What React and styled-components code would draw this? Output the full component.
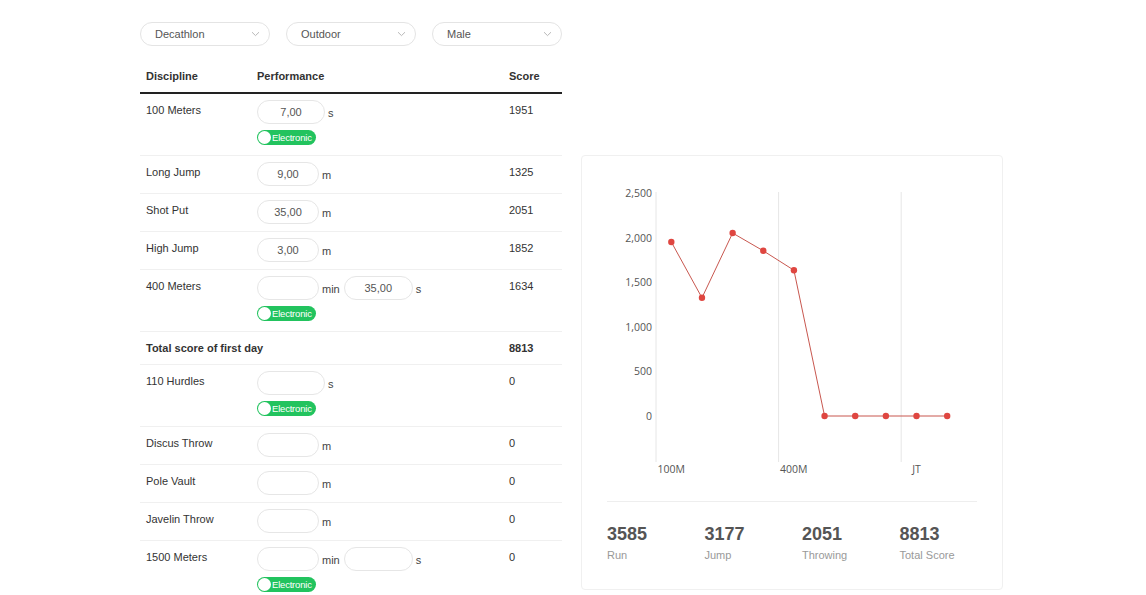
import React from "react";
import styled, { createGlobalStyle } from "styled-components";

const Global = createGlobalStyle`
  html, body { margin: 0; padding: 0; background: #fff; }
  body { font-family: "Liberation Sans", Arial, sans-serif; color: #333; }
  * { box-sizing: border-box; }
`;

const Page = styled.div`
  display: flex;
  align-items: flex-start;
  padding: 22px 0 0 140px;
`;

const LeftCol = styled.div`
  width: 422px;
  display: flex;
  flex-direction: column;
`;

const Filters = styled.div`
  display: flex;
  gap: 16px;
`;

const Select = styled.div`
  width: 130px;
  height: 24px;
  border: 1px solid #e4e4e4;
  border-radius: 12px;
  display: flex;
  align-items: center;
  justify-content: space-between;
  padding: 0 9px 0 14px;
  font-size: 11px;
  color: #555;
`;

const Table = styled.table`
  margin-top: 14px;
  width: 422px;
  border-collapse: collapse;
  font-size: 11px;
  color: #333;
`;

const Th = styled.th`
  text-align: left;
  font-weight: bold;
  padding: 8px 6px 7px;
  line-height: 17px;
  width: ${(p) => p.$w}px;
  border-bottom: 2px solid #222;
`;

const Tr = styled.tr`
  border-bottom: 1px solid #f0f0f0;
`;

const Td = styled.td`
  vertical-align: top;
  padding: ${(p) => (p.$total ? "8px 6px 7px" : "6px 6px 7px")};
  line-height: ${(p) => (p.$total ? "17px" : "20px")};
  font-weight: ${(p) => (p.$bold ? "bold" : "normal")};
`;

const InputLine = styled.div`
  display: flex;
  align-items: center;
  gap: 3px;
`;

const Field = styled.div`
  width: ${(p) => p.$w}px;
  height: 24px;
  border: 1px solid #e6e6e6;
  border-radius: 12px;
  display: flex;
  align-items: center;
  justify-content: center;
  color: #555;
  font-size: 11px;
`;

const Unit = styled.span`
  color: #444;
  font-size: 11px;
  margin-right: 1px;
  padding-top: 2px;
`;

const Toggle = styled.div`
  margin: 6px 0 3px;
  width: 59px;
  height: 15px;
  border-radius: 8px;
  background: #22c35e;
  display: flex;
  align-items: center;
  padding-left: 1px;
  gap: 1px;
`;

const Knob = styled.span`
  width: 13px;
  height: 13px;
  border-radius: 50%;
  background: #fff;
`;

const ToggleText = styled.span`
  color: #fff;
  font-size: 9.5px;
  line-height: 13px;
  letter-spacing: -0.2px;
`;

const Card = styled.div`
  margin: 133px 0 0 19px;
  width: 422px;
  height: 435px;
  border: 1px solid #f0f0f0;
  border-radius: 4px;
  display: flex;
  flex-direction: column;
`;

const ChartSvg = styled.svg`
  display: block;
`;

const Divider = styled.div`
  margin: 5px 25px 0;
  height: 1px;
  background: #eeeeee;
`;

const Stats = styled.div`
  display: grid;
  grid-template-columns: repeat(4, 97.5px);
  padding: 20px 0 0 25px;
`;

const Stat = styled.div`
  display: flex;
  flex-direction: column;
`;

const StatValue = styled.span`
  font-size: 18px;
  font-weight: bold;
  color: #555;
  line-height: 24px;
`;

const StatLabel = styled.span`
  font-size: 11px;
  color: #999;
  line-height: 16px;
  margin-top: 1px;
`;

const rows = [
  { name: "100 Meters", fields: [{ w: 68, v: "7,00", u: "s" }], toggle: true, score: 1951 },
  { name: "Long Jump", fields: [{ w: 62, v: "9,00", u: "m" }], score: 1325 },
  { name: "Shot Put", fields: [{ w: 62, v: "35,00", u: "m" }], score: 2051 },
  { name: "High Jump", fields: [{ w: 62, v: "3,00", u: "m" }], score: 1852 },
  { name: "400 Meters", fields: [{ w: 62, v: "", u: "min" }, { w: 69, v: "35,00", u: "s" }], toggle: true, score: 1634 },
  { total: true, name: "Total score of first day", score: 8813 },
  { name: "110 Hurdles", fields: [{ w: 68, v: "", u: "s" }], toggle: true, score: 0 },
  { name: "Discus Throw", fields: [{ w: 62, v: "", u: "m" }], score: 0 },
  { name: "Pole Vault", fields: [{ w: 62, v: "", u: "m" }], score: 0 },
  { name: "Javelin Throw", fields: [{ w: 62, v: "", u: "m" }], score: 0 },
  { name: "1500 Meters", fields: [{ w: 62, v: "", u: "min" }, { w: 69, v: "", u: "s" }], toggle: true, score: 0 },
];

const Chevron = () => (
  <svg width="9" height="6" viewBox="0 0 9 6">
    <path d="M1 1.2 L4.5 4.6 L8 1.2" fill="none" stroke="#b8b8b8" strokeWidth="1" />
  </svg>
);

const values = [1951, 1325, 2051, 1852, 1634, 0, 0, 0, 0, 0];

const Chart = () => {
  const x0 = 74;
  const band = 30.65;
  const y0 = 260;
  const k = 44.6 / 500;
  const pts = values.map((v, i) => [x0 + band * (i + 0.5), y0 - v * k]);
  const ticks = [0, 500, 1000, 1500, 2000, 2500];
  return (
    <ChartSvg width="420" height="340" viewBox="0 0 420 340">
      {[0, 4, 8].map((i) => (
        <line key={i} x1={x0 + band * i} x2={x0 + band * i} y1="36" y2="306" stroke="#e6e6e6" strokeWidth="1" />
      ))}
      {ticks.map((t) => (
        <text
          key={t}
          x="70"
          y={y0 - t * k + 4}
          textAnchor="end"
          fontSize="10.5"
          fill="#555"
          fontFamily="'Open Sans', sans-serif"
        >
          {t.toLocaleString("en-US")}
        </text>
      ))}
      {[
        [0, "100M"],
        [4, "400M"],
        [8, "JT"],
      ].map(([i, l]) => (
        <text
          key={l}
          x={x0 + band * i + (l === "JT" ? 11 : 1.5)}
          y="317"
          fontSize="10.5"
          fill="#555"
          fontFamily="'Open Sans', sans-serif"
        >
          {l}
        </text>
      ))}
      <polyline
        points={pts.map((p) => p.join(",")).join(" ")}
        fill="none"
        stroke="#c8574f"
        strokeWidth="1"
      />
      {pts.map((p, i) => (
        <circle key={i} cx={p[0]} cy={p[1]} r="3.2" fill="#df4640" />
      ))}
    </ChartSvg>
  );
};

export default function App() {
  return (
    <>
      <Global />
      <Page>
        <LeftCol>
          <Filters>
            {["Decathlon", "Outdoor", "Male"].map((s) => (
              <Select key={s}>
                <span>{s}</span>
                <Chevron />
              </Select>
            ))}
          </Filters>
          <Table>
            <thead>
              <tr>
                <Th $w={111}>Discipline</Th>
                <Th $w={252}>Performance</Th>
                <Th $w={59}>Score</Th>
              </tr>
            </thead>
            <tbody>
              {rows.map((r) =>
                r.total ? (
                  <Tr key={r.name}>
                    <Td $total $bold colSpan={2}>
                      {r.name}
                    </Td>
                    <Td $total $bold>
                      {r.score}
                    </Td>
                  </Tr>
                ) : (
                  <Tr key={r.name}>
                    <Td>{r.name}</Td>
                    <Td>
                      <InputLine>
                        {r.fields.map((f, i) => (
                          <React.Fragment key={i}>
                            <Field $w={f.w}>{f.v}</Field>
                            <Unit>{f.u}</Unit>
                          </React.Fragment>
                        ))}
                      </InputLine>
                      {r.toggle && (
                        <Toggle>
                          <Knob />
                          <ToggleText>Electronic</ToggleText>
                        </Toggle>
                      )}
                    </Td>
                    <Td>{r.score}</Td>
                  </Tr>
                )
              )}
            </tbody>
          </Table>
        </LeftCol>
        <Card>
          <Chart />
          <Divider />
          <Stats>
            {[
              [3585, "Run"],
              [3177, "Jump"],
              [2051, "Throwing"],
              [8813, "Total Score"],
            ].map(([v, l]) => (
              <Stat key={l}>
                <StatValue>{v}</StatValue>
                <StatLabel>{l}</StatLabel>
              </Stat>
            ))}
          </Stats>
        </Card>
      </Page>
    </>
  );
}
